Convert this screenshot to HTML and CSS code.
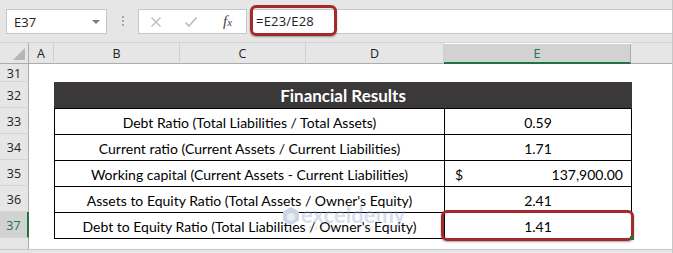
FILE: index.html
```html
<!DOCTYPE html>
<html>
<head>
  <meta charset="utf-8" />
  <title>Financial Results – Debt to Equity</title>
  <link rel="stylesheet" href="styles.css">
</head>
<body>
  <div class="app">
    <!-- Formula bar -->
    <div class="formula-bar">
      <div class="name-box">
        <span>E37</span>
        <span class="caret"></span>
      </div>
      <div class="grip"><i></i><i></i><i></i></div>
      <div class="fx-buttons">
        <svg class="btn-icon" width="12" height="12" viewBox="0 0 12 12">
          <path d="M1.5 1.5 L10.5 10.5 M10.5 1.5 L1.5 10.5" stroke="#bdbdbd" stroke-width="1.4" fill="none"/>
        </svg>
        <svg class="btn-icon" width="14" height="12" viewBox="0 0 14 12">
          <path d="M1.5 6.5 L5 10 L12.5 1.5" stroke="#bdbdbd" stroke-width="1.6" fill="none"/>
        </svg>
        <span class="fx">f<small>x</small></span>
      </div>
      <div class="formula-input">=E23/E28</div>
      <div class="callout callout-formula"></div>
    </div>

    <!-- Sheet -->
    <div class="sheet">
      <div class="corner"><span class="corner-tri"></span></div>
      <div class="col-head">A</div>
      <div class="col-head">B</div>
      <div class="col-head">C</div>
      <div class="col-head">D</div>
      <div class="col-head active">E</div>
      <div class="col-head rest"></div>

      <div class="row-head">31</div>
      <div class="row-head">32</div>
      <div class="row-head">33</div>
      <div class="row-head">34</div>
      <div class="row-head">35</div>
      <div class="row-head">36</div>
      <div class="row-head active">37</div>
      <div class="row-head rfill"></div>

      <div class="results">
        <div class="results-title">Financial Results</div>

        <div class="cell label">Debt Ratio (Total Liabilities / Total Assets)</div>
        <div class="cell value">0.59</div>

        <div class="cell label">Current ratio (Current Assets / Current Liabilities)</div>
        <div class="cell value">1.71</div>

        <div class="cell label">Working capital (Current Assets - Current Liabilities)</div>
        <div class="cell value money"><span>$</span><span>137,900.00</span></div>

        <div class="cell label">Assets to Equity Ratio (Total Assets / Owner's Equity)</div>
        <div class="cell value">2.41</div>

        <div class="cell label">Debt to Equity Ratio (Total Liabilities / Owner's Equity)</div>
        <div class="cell value">1.41</div>
      </div>

      <div class="watermark">
        <svg width="18" height="20" viewBox="0 0 18 20">
          <path d="M9 1 L17 5.5 L17 14.5 L9 19 L1 14.5 L1 5.5 Z" fill="#cdd4e4"/>
          <path d="M9 6.5 L13 9 L13 13 L9 15.5 L5 13 L5 9 Z" fill="#e8ebf2"/>
        </svg>
        <div class="wm-text">
          <span class="wm-name">exceldemy</span>
          <span class="wm-sub">EXCEL · DATA · BI</span>
        </div>
      </div>

      <div class="callout callout-cell"></div>
      <div class="fill-handle"></div>
    </div>
  </div>
</body>
</html>
```

FILE: styles.css
```css
html, body {
  margin: 0;
  padding: 0;
}
body {
  background: #e6e6e6;
  font-family: "Open Sans", sans-serif;
}
.app {
  width: 673px;
  height: 253px;
  box-sizing: border-box;
  border-right: 1px solid #c6c6c6;
  overflow: hidden;
}

/* formula bar */
.formula-bar {
  position: relative;
  display: flex;
  align-items: flex-start;
  height: 43px;
  padding-top: 9px;
  box-sizing: border-box;
  border-bottom: 1px solid #d4d4d4;
}
.name-box {
  display: flex;
  align-items: center;
  justify-content: space-between;
  margin-left: 6px;
  width: 101px;
  height: 25px;
  box-sizing: border-box;
  padding: 0 6px 0 7px;
  background: #fff;
  border: 1px solid #c6c6c6;
  font-size: 13px;
  color: #222;
}
.caret {
  width: 0;
  height: 0;
  border-left: 4px solid transparent;
  border-right: 4px solid transparent;
  border-top: 4px solid #7a7a7a;
}
.grip {
  display: flex;
  flex-direction: column;
  gap: 2px;
  margin: 7px 14px 0 15px;
}
.grip i {
  display: block;
  width: 2px;
  height: 2px;
  background: #a8a8a8;
}
.fx-buttons {
  display: flex;
  align-items: center;
  width: 109px;
  height: 25px;
  box-sizing: border-box;
  padding-left: 11px;
  background: #fff;
  border: 1px solid #c6c6c6;
}
.btn-icon {
  margin-right: 22px;
}
.btn-icon + .btn-icon {
  margin-right: 25px;
}
.fx {
  font-family: "Liberation Serif", serif;
  font-style: italic;
  font-size: 15px;
  color: #444;
}
.fx small {
  font-size: 11px;
}
.formula-input {
  flex: 1;
  height: 25px;
  margin-left: 3px;
  box-sizing: border-box;
  padding-left: 6px;
  background: #fff;
  border-top: 1px solid #c6c6c6;
  border-bottom: 1px solid #c6c6c6;
  font-size: 13px;
  letter-spacing: 0.2px;
  line-height: 23px;
  color: #222;
}

/* red annotation boxes */
.callout {
  position: absolute;
  box-sizing: border-box;
  border: 3px solid #a3292d;
  border-radius: 6px;
  box-shadow: 0 1px 2px rgba(0, 0, 0, 0.35);
}
.callout-formula {
  left: 250px;
  top: 5px;
  width: 87px;
  height: 31px;
}
.callout-cell {
  left: 441px;
  top: 167px;
  width: 193px;
  height: 31px;
}

/* sheet grid */
.sheet {
  position: relative;
  display: grid;
  grid-template-columns: 29px 25px 126px 126px 138px 187px 1fr;
  grid-template-rows: 21px 18px repeat(6, 26px) 1fr;
  height: 207px;
  box-sizing: border-box;
  background: #fff;
  border-bottom: 1px solid #c6c6c6;
}
.corner {
  position: relative;
  background: #e6e6e6;
  border-right: 1px solid #ababab;
  border-bottom: 1px solid #ababab;
}
.corner-tri {
  position: absolute;
  right: 3px;
  bottom: 3px;
  width: 0;
  height: 0;
  border-left: 12px solid transparent;
  border-bottom: 12px solid #b6b6b6;
}
.col-head {
  display: flex;
  align-items: center;
  justify-content: center;
  background: #e6e6e6;
  border-right: 1px solid #d0d0d0;
  border-bottom: 1px solid #ababab;
  font-size: 12.5px;
  color: #222;
}
.col-head.active {
  margin-top: 1px;
  background: #d2d2d2;
  color: #217346;
  border-right-color: #ababab;
  border-bottom: 2px solid #217346;
}
.col-head.rest {
  border-right: none;
}
.row-head {
  grid-column: 1;
  display: flex;
  align-items: center;
  justify-content: center;
  padding-top: 2px;
  background: #e6e6e6;
  border-right: 1px solid #ababab;
  border-bottom: 1px solid #d4d4d4;
  font-size: 12.5px;
  color: #222;
}
.row-head.active {
  background: #d2d2d2;
  color: #217346;
  border-right: 2px solid #217346;
}
.row-head.rfill {
  border-bottom: none;
}

/* results table */
.results {
  grid-column: 3 / 8;
  grid-row: 3 / 10;
  align-self: start;
  justify-self: start;
  display: grid;
  grid-template-columns: 390px 187px;
  grid-auto-rows: 26px;
  border-left: 1px solid #000;
  border-bottom: 1px solid #000;
  font-family: "Lato", sans-serif;
  font-size: 14px;
  color: #000;
}
.results-title {
  grid-column: 1 / 3;
  margin-left: -1px;
  display: flex;
  align-items: center;
  justify-content: center;
  background: #3a3838;
  color: #fff;
  font-weight: bold;
  font-size: 17px;
}
.cell {
  display: flex;
  align-items: center;
  justify-content: center;
  box-sizing: border-box;
  padding-top: 1px;
  border-top: 1px solid #000;
  border-right: 1px solid #000;
}
.cell.money {
  justify-content: space-between;
  padding: 1px 8px 0 10px;
}

/* watermark */
.watermark {
  position: absolute;
  left: 282px;
  top: 163px;
  display: flex;
  align-items: flex-start;
  gap: 1px;
  pointer-events: none;
}
.wm-text {
  display: flex;
  flex-direction: column;
  line-height: 1;
}
.wm-name {
  font-family: "Lato", sans-serif;
  font-weight: bold;
  font-size: 22px;
  line-height: 18px;
  color: rgba(150, 168, 212, 0.4);
}
.wm-sub {
  margin: 1px 0 0 8px;
  font-size: 6px;
  letter-spacing: 2.5px;
  color: rgba(160, 170, 190, 0.45);
}
.fill-handle {
  position: absolute;
  left: 630px;
  top: 193px;
  width: 4px;
  height: 4px;
  background: #217346;
}
```
